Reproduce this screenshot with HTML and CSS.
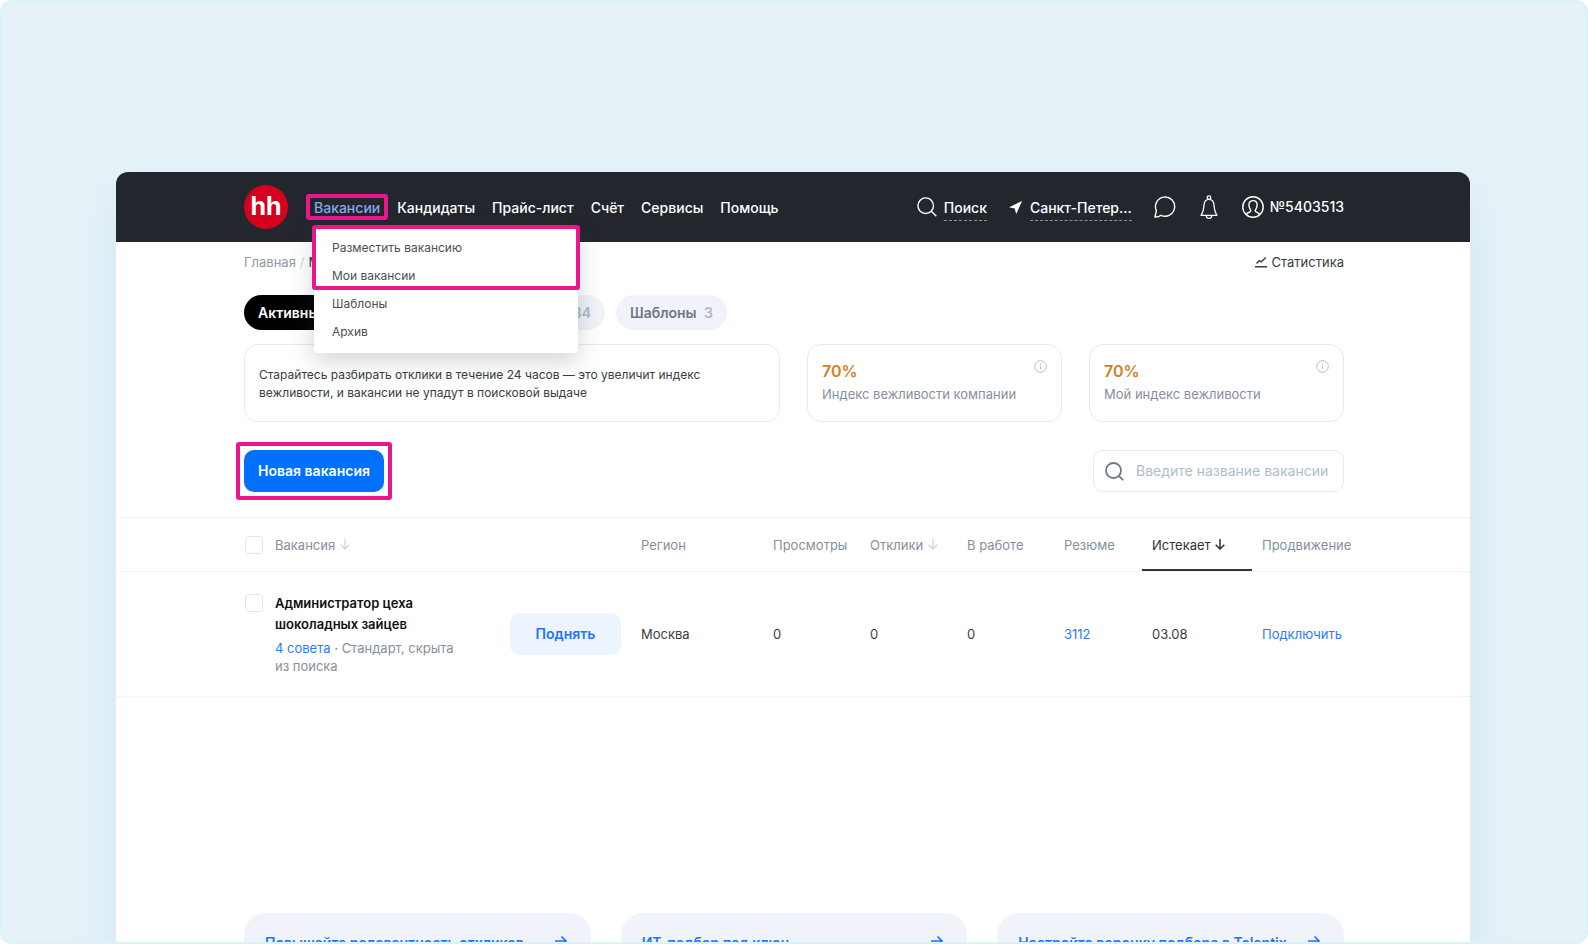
FILE: index.html
```html
<!DOCTYPE html>
<html lang="ru">
<head>
<meta charset="utf-8">
<meta name="viewport" content="width=device-width, initial-scale=1">
<title>Мои вакансии</title>
<link rel="stylesheet" href="styles.css">
</head>
<body>
<div class="frame">
  <div class="window">
    <header class="topbar">
      <a class="logo" href="#">hh</a>
      <nav class="nav">
        <div class="nav-item">
          <a class="nav-link nav-link-current" href="#">Вакансии</a>
          <div class="menu">
            <div class="menu-group menu-group-marked">
              <a class="menu-link" href="#">Разместить вакансию</a>
              <a class="menu-link" href="#">Мои вакансии</a>
            </div>
            <a class="menu-link" href="#">Шаблоны</a>
            <a class="menu-link" href="#">Архив</a>
          </div>
        </div>
        <a class="nav-link" href="#">Кандидаты</a>
        <a class="nav-link" href="#">Прайс-лист</a>
        <a class="nav-link" href="#">Счёт</a>
        <a class="nav-link" href="#">Сервисы</a>
        <a class="nav-link" href="#">Помощь</a>
      </nav>
      <div class="tools">
        <a class="tool tool-search" href="#">
          <svg width="20" height="20" viewBox="0 0 20 20" fill="none" stroke="currentColor" stroke-width="1.4"><circle cx="8.7" cy="8.7" r="7.8"/><path d="M14.3 14.3l5 5"/></svg>
          <span class="dashed">Поиск</span>
        </a>
        <a class="tool tool-city" href="#">
          <svg width="13" height="13" viewBox="0 0 13 13" fill="currentColor"><path d="M13 0L0 6.200l5.600 1.200L7.300 13z"/></svg>
          <span class="dashed">Санкт-Петер...</span>
        </a>
        <button class="tool icon-button" type="button" aria-label="Сообщения">
          <svg width="22" height="22" viewBox="0 0 22 22" fill="none" stroke="currentColor" stroke-width="1.400" stroke-linejoin="round"><path d="M1 21l1.400-6.300A9.600 9.600 0 1 1 7 19.300C5.500 20.600 3.500 21 1 21z"/></svg>
        </button>
        <button class="tool icon-button" type="button" aria-label="Уведомления">
          <svg width="18" height="24" viewBox="0 0 18 24" fill="none" stroke="currentColor" stroke-width="1.300" stroke-linejoin="round"><circle cx="9" cy="2.600" r="1.800"/><path d="M9 4.400c-3.300 0-4.700 2.300-5 5.600-.3 4-.6 7-3 10.300h16c-2.400-3.300-2.700-6.300-3-10.300-.3-3.300-1.700-5.600-5-5.600z"/><path d="M6.300 20.800a2.700 2.500 0 0 0 5.400 0"/></svg>
        </button>
        <a class="tool tool-user" href="#">
          <svg width="22" height="22" viewBox="0 0 22 22" fill="none" stroke="currentColor" stroke-width="1.400" stroke-linejoin="round"><circle cx="11" cy="11" r="10.200"/><path d="M4.500 18.500c.5-2.300 4.300-2.200 4.300-3.600 0-1.200-1.900-2.600-1.900-5.900 0-2.900 1.600-4.400 4.100-4.400s4.100 1.500 4.100 4.400c0 3.300-1.900 4.700-1.900 5.900 0 1.400 3.800 1.300 4.300 3.600"/></svg>
          <span>№5403513</span>
        </a>
      </div>
    </header>

    <main>
      <div class="content">
        <div class="crumb-row">
          <nav class="crumbs"><a href="#">Главная</a><span class="slash">/</span><span class="crumb-current">Мои вакансии</span></nav>
          <a class="stats" href="#">
            <svg width="12" height="12" viewBox="0 0 12 12" fill="none" stroke="currentColor" stroke-width="1.400"><path d="M1.500 7.500L4.300 4.600l2 1.200L10.800 1.500M0 10.800h12"/></svg>
            Статистика
          </a>
        </div>

        <div class="tabs">
          <button class="tab tab-active" type="button">Активные <span class="count">1</span></button>
          <button class="tab tab-archive" type="button">Архивные <span class="count">34</span></button>
          <button class="tab" type="button">Шаблоны <span class="count">3</span></button>
        </div>

        <div class="cards">
          <section class="card card-tip">Старайтесь разбирать отклики в течение 24 часов — это увеличит индекс вежливости, и вакансии не упадут в поисковой выдаче</section>
          <section class="card">
            <div><strong class="percent">70%</strong><p class="label">Индекс вежливости компании</p></div>
            <svg class="info" width="13" height="13" viewBox="0 0 13 13" fill="none" stroke="currentColor"><circle cx="6.500" cy="6.500" r="5.800"/><path d="M6.500 5.800v3.500M6.500 3.500v1.200"/></svg>
          </section>
          <section class="card">
            <div><strong class="percent">70%</strong><p class="label">Мой индекс вежливости</p></div>
            <svg class="info" width="13" height="13" viewBox="0 0 13 13" fill="none" stroke="currentColor"><circle cx="6.500" cy="6.500" r="5.800"/><path d="M6.500 5.800v3.500M6.500 3.500v1.200"/></svg>
          </section>
        </div>

        <div class="actions">
          <button class="primary" type="button">Новая вакансия</button>
          <label class="search">
            <svg width="19" height="19" viewBox="0 0 19 19" fill="none" stroke="currentColor" stroke-width="1.800"><circle cx="8.500" cy="8.500" r="7.500"/><path d="M13.800 13.800l4.400 4.400"/></svg>
            <input type="text" placeholder="Введите название вакансии" aria-label="Введите название вакансии">
          </label>
        </div>
      </div>

      <table class="vacancies">
        <colgroup>
          <col class="c-left"><col class="c-check"><col class="c-name"><col class="c-action"><col class="c-region"><col class="c-num"><col class="c-num"><col class="c-num"><col class="c-resume"><col class="c-expire"><col class="c-promo"><col class="c-right">
        </colgroup>
        <thead>
          <tr>
            <td></td>
            <th class="check"><input type="checkbox" aria-label="Выбрать все"></th>
            <th>Вакансия <svg class="sort" width="10" height="11" viewBox="0 0 10 11" fill="none" stroke="currentColor" stroke-width="1.300"><path d="M5 0v10M.7 5.700L5 10l4.300-4.300"/></svg></th>
            <td></td>
            <th>Регион</th>
            <th>Просмотры</th>
            <th>Отклики <svg class="sort" width="10" height="11" viewBox="0 0 10 11" fill="none" stroke="currentColor" stroke-width="1.300"><path d="M5 0v10M.7 5.700L5 10l4.300-4.300"/></svg></th>
            <th>В работе</th>
            <th>Резюме</th>
            <th class="sorted">Истекает <svg class="sort" width="10" height="11" viewBox="0 0 10 11" fill="none" stroke="currentColor" stroke-width="1.500"><path d="M5 0v10M.7 5.700L5 10l4.300-4.300"/></svg></th>
            <th>Продвижение</th>
            <td></td>
          </tr>
        </thead>
        <tbody>
          <tr>
            <td></td>
            <td class="check"><input type="checkbox" aria-label="Выбрать вакансию"></td>
            <td class="name">
              <a class="name-title" href="#">Администратор цеха шоколадных зайцев</a>
              <p class="name-note"><a class="blue" href="#">4 совета ·</a> Стандарт, скрыта из поиска</p>
            </td>
            <td><button class="raise" type="button">Поднять</button></td>
            <td>Москва</td>
            <td>0</td>
            <td>0</td>
            <td>0</td>
            <td><a class="blue" href="#">3112</a></td>
            <td>03.08</td>
            <td><a class="blue" href="#">Подключить</a></td>
            <td></td>
          </tr>
        </tbody>
      </table>

      <div class="content promos">
        <a class="promo" href="#"><span>Повышайте релевантность откликов</span><svg width="12" height="12" viewBox="0 0 12 12" fill="none" stroke="currentColor" stroke-width="1.600"><path d="M0 6h11M6.500 1.500L11 6l-4.500 4.500"/></svg></a>
        <a class="promo" href="#"><span>ИТ-подбор под ключ</span><svg width="12" height="12" viewBox="0 0 12 12" fill="none" stroke="currentColor" stroke-width="1.600"><path d="M0 6h11M6.500 1.500L11 6l-4.500 4.500"/></svg></a>
        <a class="promo" href="#"><span>Настройте воронку подбора в Talantix</span><svg width="12" height="12" viewBox="0 0 12 12" fill="none" stroke="currentColor" stroke-width="1.600"><path d="M0 6h11M6.500 1.500L11 6l-4.500 4.500"/></svg></a>
      </div>
    </main>
  </div>
</div>
</body>
</html>
```
FILE: styles.css
```css
* { box-sizing: border-box; }

:root {
  --pink: #ec168c;
  --blue: #2f78ff;
  --line: #f1f3f6;
  --edge: #e6ebf3;
  --muted: #868f9b;
}

body {
  margin: 0;
  background: #fff;
  color: #3a3d40;
  font-family: Inter, "Liberation Sans", sans-serif;
  font-size: 13px;
  line-height: 18px;
}

a { color: inherit; text-decoration: none; }
button, input { font: inherit; }
button { cursor: pointer; }
p { margin: 0; }
svg { display: block; flex: none; }

.frame {
  height: 100vh;
  overflow: hidden;
  padding: 170px 116px 0 114px;
  border: 2px solid #daf2fa;
  border-radius: 12px;
  background: #e6f2f8;
}

.window {
  min-height: 100%;
  border-radius: 12px 12px 0 0;
  background: #fff;
  box-shadow: 0 24px 48px rgba(165, 205, 222, 0.3);
}

.topbar {
  display: flex;
  align-items: center;
  height: 70px;
  padding: 0 126px 0 128px;
  border-radius: 12px 12px 0 0;
  background: #23262d;
  color: #fff;
  font-size: 14px;
  font-weight: 500;
  line-height: 20px;
}

.logo {
  width: 44px;
  height: 44px;
  margin-right: 26px;
  border-radius: 50%;
  background: #d6001c;
  font-size: 25px;
  font-weight: 700;
  line-height: 43px;
  text-align: center;
}

.nav { display: flex; gap: 17px; }
.nav-item { position: relative; }
.nav-link { display: block; padding-top: 1px; }
.nav-link-current { position: relative; color: #86a9ee; }

/* Pink frames that point out where to click */
.nav-link-current::after,
.menu-group-marked::after,
.primary::after {
  content: "";
  position: absolute;
  border: 4px solid var(--pink);
  border-radius: 3px;
}

.nav-link-current::after { inset: -3px -8px -2px; }
.menu-group-marked::after { inset: -2px -2px 0; }
.primary::after { inset: -8px; }

.menu {
  position: absolute;
  z-index: 2;
  top: 30px;
  left: 0;
  width: 264px;
  padding-bottom: 7px;
  border-radius: 2px;
  background: #fff;
  box-shadow: 0 8px 24px rgba(60, 70, 80, 0.24);
  color: #4b5055;
  font-size: 12px;
  font-weight: 400;
}

.menu-group { padding-top: 7px; }
.menu-group-marked { position: relative; }
.menu-link { display: block; padding: 4px 18px; }

.tools { display: flex; align-items: center; margin-left: auto; }
.tool { display: flex; align-items: center; }
.tool-search { gap: 7px; margin-right: 22px; }
.tool-city { gap: 8px; margin-right: 22px; }
.tool-user { gap: 6px; }
.dashed { margin-top: 5px; padding-bottom: 2px; border-bottom: 1px dashed #8b8e92; }

.icon-button {
  margin-right: 24px;
  padding: 0;
  border: 0;
  background: none;
  color: inherit;
}

.content { padding: 0 126px 0 128px; }

.crumb-row { display: flex; justify-content: space-between; padding: 11px 0 24px; }
.crumbs { color: #8d9aa3; }
.slash { margin: 0 4px; color: #ccd4dc; }
.crumb-current { color: #303233; }
.stats { display: flex; align-items: center; gap: 4px; }

.tabs { display: flex; gap: 11px; }

.tab {
  height: 35px;
  padding: 0 14px;
  border: 0;
  border-radius: 18px;
  background: #f0f3f9;
  color: #6d7986;
  font-size: 14px;
  font-weight: 600;
}

.tab-active { width: 128px; background: #000; color: #fff; text-align: left; }
.tab-archive { width: 222px; text-align: right; }
.count { margin-left: 4px; color: #a8b9c8; }

.cards {
  display: grid;
  grid-template-columns: 536fr 255fr 255fr;
  gap: 27px;
  margin-top: 14px;
}

.card {
  display: flex;
  justify-content: space-between;
  min-height: 78px;
  padding: 15px 14px;
  border: 1px solid var(--edge);
  border-radius: 14px;
}

.card-tip { padding-top: 21px; padding-right: 48px; font-size: 12px; }
.percent { display: block; color: #d1811f; font-size: 16px; font-weight: 600; line-height: 22px; }
.label { margin-top: 3px; color: var(--muted); }
.info { color: #afbfce; }

.actions { display: flex; align-items: center; justify-content: space-between; padding: 28px 0 25px; }

.primary {
  position: relative;
  height: 42px;
  width: 140px;
  padding: 0;
  border: 0;
  border-radius: 10px;
  background: #0070ff;
  color: #fff;
  font-size: 14px;
  font-weight: 600;
}

.search {
  display: flex;
  align-items: center;
  gap: 12px;
  width: 251px;
  height: 42px;
  padding: 0 11px;
  border: 1px solid var(--edge);
  border-radius: 10px;
  color: #6d7986;
}

.search input {
  flex: 1;
  min-width: 0;
  padding: 0;
  border: 0;
  outline: 0;
  background: none;
  font-size: 14px;
}

.search input::placeholder { color: #adbdc9; opacity: 1; }

.vacancies {
  width: 100%;
  table-layout: fixed;
  border-collapse: separate;
  border-spacing: 0;
  border-top: 1px solid var(--line);
}

.c-left { width: 128px; }
.c-check { width: 21px; }
.c-action { width: 131px; }
.c-region { width: 132px; }
.c-num { width: 97px; }
.c-resume { width: 88px; }
.c-expire { width: 110px; }
.c-promo { width: 92px; }
.c-right { width: 126px; }

.vacancies th,
.vacancies td {
  padding: 0 0 0 10px;
  border-bottom: 1px solid var(--line);
  text-align: left;
  white-space: nowrap;
}

.vacancies th { height: 54px; color: var(--muted); font-weight: 400; }
.vacancies tbody td { height: 125px; }
.vacancies .check { padding: 0 0 0 1px; }
.vacancies tbody .check { padding-top: 22px; vertical-align: top; }
.vacancies .sorted { box-shadow: inset 0 -2px #303641; color: #303233; }

.sort { display: inline-block; margin-left: 1px; color: #cbd6e2; }
.sorted .sort { color: #303233; }

.check input {
  display: block;
  appearance: none;
  width: 18px;
  height: 18px;
  margin: 0;
  border: 1px solid #e0e6ef;
  border-radius: 4px;
  background: #fff;
}

.vacancies .name { padding-right: 44px; white-space: normal; }
.name-title { display: block; color: #111; font-weight: 600; line-height: 21px; }
.name-note { margin-top: 4px; color: var(--muted); }
.blue { color: var(--blue); }

.raise {
  width: 111px;
  height: 42px;
  border: 0;
  border-radius: 10px;
  background: #ebf4ff;
  color: #1f74ff;
  font-size: 14px;
  font-weight: 600;
}

.promos {
  display: grid;
  grid-template-columns: repeat(3, 1fr);
  gap: 30px;
  margin-top: 216px;
}

.promo {
  display: flex;
  align-items: flex-start;
  justify-content: space-between;
  min-height: 140px;
  padding: 20px 24px 20px 21px;
  border-radius: 22px;
  background: #f0f3f9;
  color: #1f74ff;
  font-size: 14px;
  font-weight: 600;
  line-height: 20px;
}

.promo svg { margin-top: 2px; }
```
